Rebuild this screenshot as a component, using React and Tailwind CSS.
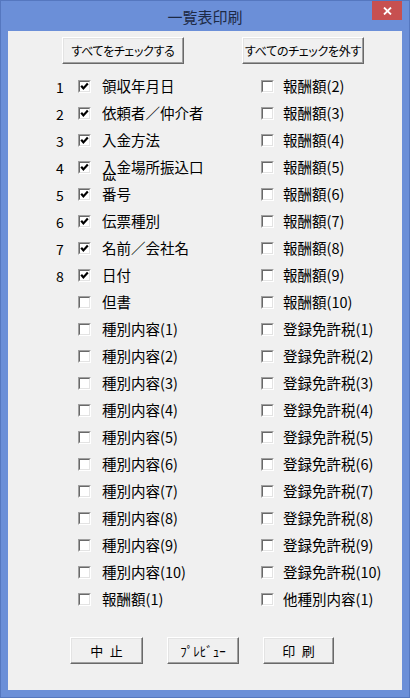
import React, { useState } from 'react';

const LEFT_ITEMS = [
  { no: '1', label: '領収年月日', checked: true },
  { no: '2', label: '依頼者／仲介者', checked: true },
  { no: '3', label: '入金方法', checked: true },
  { no: '4', label: '入金場所振込口座', checked: true },
  { no: '5', label: '番号', checked: true },
  { no: '6', label: '伝票種別', checked: true },
  { no: '7', label: '名前／会社名', checked: true },
  { no: '8', label: '日付', checked: true },
  { no: '', label: '但書', checked: false },
  ...Array.from({ length: 10 }, (_, i) => ({ no: '', label: `種別内容(${i + 1})`, checked: false })),
  { no: '', label: '報酬額(1)', checked: false },
];

const RIGHT_ITEMS = [
  ...Array.from({ length: 9 }, (_, i) => ({ label: `報酬額(${i + 2})`, checked: false })),
  ...Array.from({ length: 10 }, (_, i) => ({ label: `登録免許税(${i + 1})`, checked: false })),
  { label: '他種別内容(1)', checked: false },
];

// sunken classic checkbox
const CheckBox = ({ checked, onClick }) => (
  <div
    onClick={onClick}
    className="w-[13px] h-[13px] shrink-0 border border-t-[#a0a0a0] border-l-[#a0a0a0] border-b-white border-r-white"
  >
    <div className="w-full h-full bg-white border border-t-[#696969] border-l-[#696969] border-b-[#e3e3e3] border-r-[#e3e3e3] flex items-center justify-center">
      {checked && (
        <svg width="9" height="9" viewBox="0 0 9 9">
          <path d="M1.2 3.8 L3.4 6.4 L7.8 1.6" fill="none" stroke="#000" strokeWidth="2.2" />
        </svg>
      )}
    </div>
  </div>
);

// raised classic button
const Button = ({ children, className = '' }) => (
  <button
    className={`h-[27px] bg-[#f0f0f0] text-black border border-t-white border-l-white border-b-[#696969] border-r-[#696969] shadow-[inset_-1px_-1px_0_#a0a0a0,inset_1px_1px_0_#e3e3e3] flex items-center justify-center ${className}`}
  >
    {children}
  </button>
);

const LeftRow = ({ item, checked, onToggle }) => (
  <div className="h-[27px] flex items-center">
    <span className="w-[20px] text-center text-[14px] leading-none">{item.no}</span>
    <div className="ml-[8px]">
      <CheckBox checked={checked} onClick={onToggle} />
    </div>
    <div className="ml-[11px] w-[110px] h-[27px] overflow-hidden pt-[7px] text-[14.5px] leading-[12px] self-start">
      {item.label}
    </div>
  </div>
);

const RightRow = ({ item, checked, onToggle }) => (
  <div className="h-[27px] flex items-center">
    <CheckBox checked={checked} onClick={onToggle} />
    <div className="ml-[9px] w-[110px] h-[27px] overflow-hidden pt-[7px] text-[14.5px] leading-[12px] self-start">
      {item.label}
    </div>
  </div>
);

const App = () => {
  const [left, setLeft] = useState(LEFT_ITEMS.map((i) => i.checked));
  const [right, setRight] = useState(RIGHT_ITEMS.map((i) => i.checked));

  const toggle = (list, setList, idx) => {
    const next = [...list];
    next[idx] = !next[idx];
    setList(next);
  };

  return (
    <div className="w-[410px] h-[698px] bg-[#6b8fd8] border border-[#5577bf] flex flex-col font-['Noto_Sans_CJK_JP',sans-serif] text-black">
      {/* Title bar */}
      <div className="h-[30px] relative flex items-center justify-center pt-[3px]">
        <span className="text-[15px] text-[#1d2a45]">一覧表印刷</span>
        <div className="absolute top-0 right-[7px] w-[30px] h-[19px] bg-[#c75050] flex items-center justify-center">
          <svg width="9" height="8" viewBox="0 0 9 8">
            <path d="M1 0.5 L8 7.5 M8 0.5 L1 7.5" stroke="#fff" strokeWidth="1.8" />
          </svg>
        </div>
      </div>

      {/* Client area */}
      <div className="flex-1 mx-[7px] mb-[7px] bg-[#f0f0f0] flex flex-col">
        <div className="flex mt-[6px] pl-[54px] gap-[58px] text-[12px] [font-feature-settings:'palt'] tracking-[-0.3px]">
          <Button className="w-[122px]">すべてをチェックする</Button>
          <Button className="w-[122px]">すべてのチェックを外す</Button>
        </div>

        <div className="mt-[9px] pl-[42px] grid grid-cols-[211px_1fr]">
          <div className="flex flex-col">
            {LEFT_ITEMS.map((item, i) => (
              <LeftRow key={i} item={item} checked={left[i]} onToggle={() => toggle(left, setLeft, i)} />
            ))}
          </div>
          <div className="flex flex-col">
            {RIGHT_ITEMS.map((item, i) => (
              <RightRow key={i} item={item} checked={right[i]} onToggle={() => toggle(right, setRight, i)} />
            ))}
          </div>
        </div>

        <div className="flex mt-[24px] pl-[62px] gap-[24px] text-[13px]">
          <Button className="w-[73px]">中{'\u2002'}止</Button>
          <Button className="w-[72px]">ﾌﾟﾚﾋﾞｭｰ</Button>
          <Button className="w-[71px]">印{'\u2002'}刷</Button>
        </div>
      </div>
    </div>
  );
};

export default App;
